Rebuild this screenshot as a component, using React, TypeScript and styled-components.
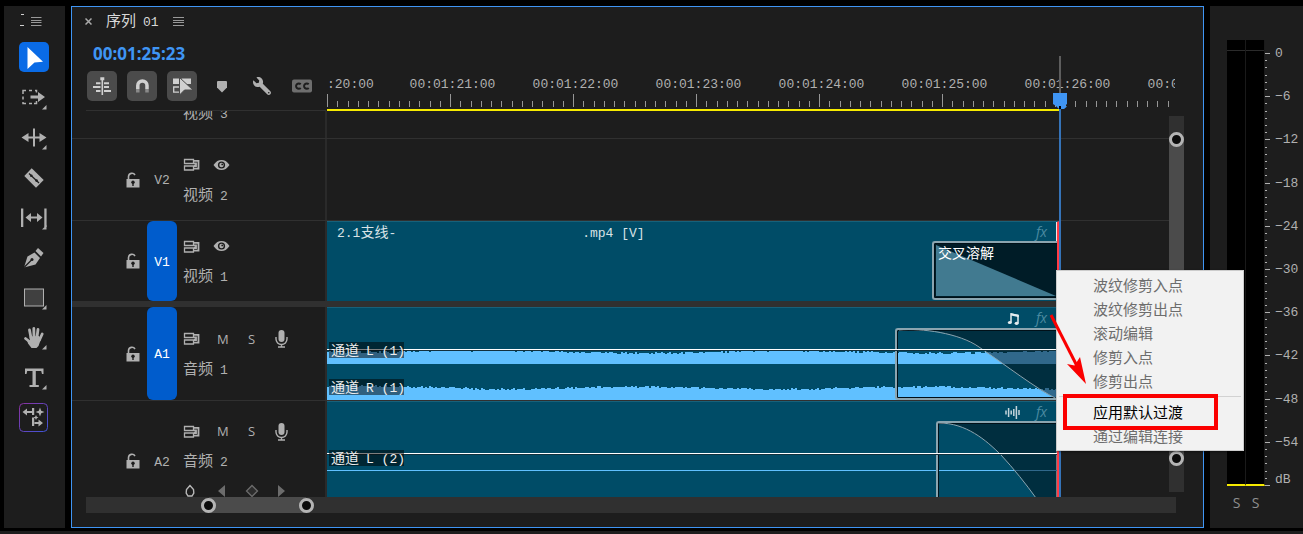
import React from "react";
import styled, { createGlobalStyle, css } from "styled-components";
import { FaWrench } from "react-icons/fa";

const PX_PER_SECOND = 123;
const HEAD_WIDTH = 255;
const CLIP_WIDTH = 732;
const PLAYHEAD = 733;

const color = {
  panel: "#1d1d1d",
  line: "#303030",
  icon: "#b0b0b0",
  accent: "#3f95f4",
  blue: "#005ccc",
  clip: "#004c67",
  wave: "#60c0ff",
};

const cjk = `"Noto Sans CJK SC", sans-serif`;
const mono = `"Liberation Mono", "Noto Sans CJK SC", monospace`;

const Global = createGlobalStyle`
  * { box-sizing: border-box; }
  body { margin: 0; background: #000; color: ${color.icon}; font-family: ${cjk}; font-size: 15px; overflow: hidden; }
  button { padding: 0; border: 0; background: none; color: inherit; font: inherit; }
  svg { display: block; flex: none; }
`;

const Page = styled.div`
  position: relative;
  display: flex;
  flex-direction: column;
  gap: 3px;
  height: 100vh;
  padding-top: 6px;
`;
const Workspace = styled.main`
  flex: 1;
  min-height: 0;
  display: flex;
  gap: 6px;
  padding-left: 4px;
`;
const StatusStrip = styled.footer`
  height: 3px;
  background: ${color.panel};
`;

/* ---------- tool palette ---------- */
const ToolPanel = styled.aside`
  width: 61px;
  background: ${color.panel};
  display: flex;
  flex-direction: column;
`;
const ToolTab = styled.div`
  height: 36px;
  padding-left: 15px;
  display: flex;
  align-items: flex-start;
`;
const ToolList = styled.div`
  display: flex;
  flex-direction: column;
  gap: 10px;
  padding-left: 15px;
`;
const ToolButton = styled.button<{ $active?: boolean }>`
  width: 30px;
  height: 30px;
  border-radius: 5px;
  color: ${(p) => (p.$active ? "#fff" : color.icon)};
  background: ${(p) => (p.$active ? "#0a6be6" : "transparent")};
`;

const Corner = () => <path d="M27.500 23v4.500h-4.500z" fill="currentColor" />;

const tools: { name: string; art: React.ReactNode }[] = [
  { name: "选择工具", art: <path d="M8.500 5 24 19.800l-8.500.7-7 6.500z" fill="currentColor" /> },
  {
    name: "向前选择轨道工具",
    art: (
      <>
        <path d="M4 12V8.500h3M10 8.500h3M16 8.500h1.500v2M4 14.500v3M4 20v1.500h3M10 21.500h3M15 21.500h2.500V19" fill="none" stroke="currentColor" strokeWidth="1.500" />
        <path d="M11.500 13.500H19v-3.500l7 5-7 5v-3.500h-7.500z" fill="currentColor" />
        <Corner />
      </>
    ),
  },
  {
    name: "波纹编辑工具",
    art: (
      <>
        <path d="M14 6.500h2v18h-2zM2.500 15.500l7-4.500v3.500h11V11l7 4.500-7 4.500v-3.500h-11V20z" fill="currentColor" />
        <Corner />
      </>
    ),
  },
  {
    name: "剃刀工具",
    art: (
      <>
        <path d="M12.700 6.300 24.700 18 17 25.700 5.300 14z" fill="currentColor" />
        <path d="m10 11.500 10 9.500" stroke={color.panel} strokeWidth="1.300" />
        <circle cx="12.300" cy="13.700" r="1.300" fill={color.panel} />
        <circle cx="17.500" cy="18.600" r="1.300" fill={color.panel} />
      </>
    ),
  },
  {
    name: "外滑工具",
    art: (
      <>
        <path d="M2 6.500h2.300v18.500H2zM25.300 6.500h2.300v18.500h-2.300zM6.500 15.500l5.500-4.500v3.500h6V11l5.500 4.500L18 20v-3.500h-6V20z" fill="currentColor" />
        <Corner />
      </>
    ),
  },
  {
    name: "钢笔工具",
    art: (
      <>
        <path d="M5 25.500 8.500 14.500l7-4L21 16l-4.500 6.500z" fill="currentColor" />
        <path d="m16.500 9 2.500-3 5.500 5-2.500 3.500z" fill="currentColor" />
        <path d="m5 25.500 7.500-7.500" stroke={color.panel} strokeWidth="1.200" />
        <circle cx="13" cy="17.500" r="1.500" fill={color.panel} />
      </>
    ),
  },
  {
    name: "矩形工具",
    art: (
      <>
        <rect x="5.500" y="7" width="19" height="17" fill="#404040" stroke="currentColor" />
        <Corner />
      </>
    ),
  },
  {
    name: "手形工具",
    art: (
      <>
        <path d="M10.500 8 12 16M14.800 6.500 15 15M19 7.500 18 15M23.200 12 20.500 18M6.500 16.500 11 20" stroke="currentColor" strokeWidth="2.800" strokeLinecap="round" />
        <path d="M10.500 14.500 20 14l2 3-2.500 7-2 2h-5L9 21.500l-1-3.500 3 1z" fill="currentColor" />
        <Corner />
      </>
    ),
  },
  {
    name: "文字工具",
    art: (
      <>
        <path d="M6 6.500h18.500V12H23l-.8-3h-5.400v14h3v2h-9.300v-2h3V9H8.200L7.500 12H6z" fill="currentColor" />
        <Corner />
      </>
    ),
  },
  {
    name: "重新混合工具",
    art: (
      <>
        <defs>
          <linearGradient id="remix" x1="0" y1="0" x2="1" y2="1">
            <stop offset="0" stopColor="#8a32a0" />
            <stop offset="1" stopColor="#3f55d8" />
          </linearGradient>
        </defs>
        <rect x=".5" y="1.500" width="28" height="28" rx="4" fill="none" stroke="url(#remix)" />
        <path d="M13 6h2.200v7H13zM13 15.500h2.200V24H13zM3.500 10 8 6.500V9h5v2H8v2.500zM24 21l-4.500 3.500V22h-4v-2h4v-2.500zM21 5.500l1.200 3.300 3.300 1.200-3.300 1.200L21 14.500l-1.200-3.300-3.300-1.200 3.300-1.200zM17 13l.8 1.700 1.700.8-1.700.8-.8 1.700-.8-1.700-1.700-.8 1.700-.8z" fill="currentColor" />
      </>
    ),
  },
];

/* ---------- timeline panel ---------- */
const Timeline = styled.section`
  flex: 1;
  min-width: 0;
  display: flex;
  flex-direction: column;
  padding-bottom: 14px;
  background: ${color.panel};
  border: 1px solid ${color.accent};
`;
const TitleBar = styled.header`
  height: 29px;
  padding-left: 13px;
  display: flex;
  align-items: center;
  gap: 14px;
  color: #d8d8d8;
`;
const TitleText = styled.h1`
  margin: 0;
  font-size: 15px;
  font-weight: 400;
  line-height: 24px;
`;
const Latin = styled.span`
  font-family: ${mono};
  font-size: 13px;
`;
const Index = styled(Latin)`
  margin-left: 7px;
`;
const Stage = styled.div`
  position: relative;
  flex: 1;
  min-height: 0;
  display: flex;
  flex-direction: column;
`;
const TopRow = styled.div`
  display: flex;
  height: 75px;
`;
const Controls = styled.div`
  width: ${HEAD_WIDTH - 1}px;
  margin-right: 1px;
  padding-left: 14px;
`;
const Timecode = styled.div`
  height: 35px;
  padding-left: 7px;
  line-height: 36px;
  font-family: "Noto Sans", sans-serif;
  font-size: 17px;
  font-weight: 700;
  color: ${color.accent};
`;
const Buttons = styled.div`
  display: flex;
  gap: 10px;
  padding: 0 0 9px 1px;
  border-bottom: 1px solid ${color.line};
`;
const OptionButton = styled.button<{ $on?: boolean }>`
  width: 30px;
  height: 30px;
  border-radius: 5px;
  background: ${(p) => (p.$on ? "#4b4b4b" : "transparent")};
  color: ${(p) => (p.$on ? "#d0d0d0" : color.icon)};
  display: flex;
  align-items: center;
  justify-content: center;
`;
const Ruler = styled.div`
  flex: 1;
  min-width: 0;
  margin-right: 28px;
  display: flex;
  flex-direction: column;
  justify-content: flex-end;
  overflow: hidden;
`;
const RulerLabels = styled.div`
  display: flex;
  height: 20px;
  line-height: 22px;
  font-family: ${mono};
  font-size: 13px;
`;
const RulerLabel = styled.span<{ $first?: boolean }>`
  flex: 0 0 ${(p) => (p.$first ? 64 : PX_PER_SECOND)}px;
  text-align: ${(p) => (p.$first ? "left" : "center")};
`;
const WorkArea = styled.div`
  width: ${PLAYHEAD}px;
  height: 2px;
  margin-top: 2px;
  background: #f6ea00;
`;

const TracksRow = styled.div`
  flex: 1;
  min-height: 0;
  display: flex;
`;
const Tracks = styled.div`
  flex: 1;
  min-width: 0;
  overflow: hidden;
`;
const Track = styled.div<{ $height: number; $line?: boolean }>`
  display: flex;
  height: ${(p) => p.$height}px;
  align-items: flex-end;
  overflow: hidden;
  ${(p) => p.$line && css`border-bottom: 1px solid ${color.line};`}
`;
const TrackDivider = styled.div`
  height: 6px;
  background: ${color.line};
`;
const Head = styled.div<{ $height: number }>`
  flex: 0 0 ${HEAD_WIDTH}px;
  height: ${(p) => p.$height}px;
  display: flex;
  align-items: center;
  padding-left: 53px;
  border-right: 2px solid #2a2a2a;
`;
const LockButton = styled.button`
  width: 16px;
  height: 16px;
  margin-right: 6px;
`;
const Patch = styled.button<{ $on?: boolean }>`
  width: 30px;
  height: 100%;
  padding-top: 2px;
  border-radius: 6px;
  background: ${(p) => (p.$on ? color.blue : "transparent")};
  color: ${(p) => (p.$on ? "#fff" : color.icon)};
  font-family: ${mono};
  font-size: 13px;
`;
const HeadLines = styled.div`
  padding-left: 6px;
`;
const HeadLine = styled.div`
  display: flex;
  align-items: center;
  height: 30px;
`;
const TrackName = styled.div`
  height: 30px;
  line-height: 28px;
`;
const HeadButton = styled.button<{ $inset?: number }>`
  width: 30px;
  height: 20px;
  padding-left: ${(p) => p.$inset ?? 0}px;
  display: flex;
  align-items: center;
  font-family: "Open Sans", sans-serif;
  font-size: 13px;
`;
const Lane = styled.div`
  flex: 1;
  min-width: 0;
  height: 100%;
`;

const Clip = styled.div`
  position: relative;
  width: ${CLIP_WIDTH}px;
  height: 100%;
  background: ${color.clip};
  border-top: 1px solid #17617a;
  border-right: 2px solid #ff3b46;
  box-shadow: inset -1px 0 #e8e8e8;
  color: #d8e2e6;
`;
const ClipBar = styled.div`
  display: flex;
  align-items: baseline;
  height: 20px;
  padding: 0 10px;
  line-height: 18px;
  font-size: 14px;
`;
const ClipSuffix = styled(Latin)`
  margin-left: 186px;
`;
const ClipTags = styled.div`
  margin-left: auto;
  display: flex;
  align-items: center;
  gap: 16px;
  line-height: 20px;
`;
const Fx = styled.span`
  font-family: "Open Sans", sans-serif;
  font-style: italic;
  font-size: 14px;
  color: #4b8aa0;
`;
const Channel = styled.div<{ $top: number }>`
  position: relative;
  height: 36px;
  padding: ${(p) => p.$top}px 0 0 2px;
  > svg { position: absolute; left: 0; bottom: 0; }
`;
const ChannelLabel = styled.span`
  position: relative;
  z-index: 3;
  display: block;
  width: 75px;
  height: 16px;
  padding-left: 2px;
  line-height: 15px;
  background: rgba(0, 0, 0, 0.5);
  color: #eee;
  font-size: 14px;
  white-space: nowrap;
`;
const LevelLine = styled.div<{ $top: number }>`
  position: absolute;
  z-index: 2;
  left: 0;
  right: 0;
  top: ${(p) => p.$top}px;
  height: 2px;
  background: #fff;
  border-bottom: 1px solid #12303c;
`;
const SilentLine = styled.div`
  position: absolute;
  left: 0;
  right: 0;
  top: 68px;
  height: 1px;
  background: ${color.wave};
`;
const Transition = styled.div<{ $width: number; $height: number; $top: number; $solid?: boolean }>`
  position: absolute;
  right: 0;
  top: ${(p) => p.$top}px;
  width: ${(p) => p.$width}px;
  height: ${(p) => p.$height}px;
  overflow: hidden;
  border: 2px solid #8ba5b0;
  border-right: 0;
  border-radius: 3px 0 0 3px;
  box-shadow: inset 1px 1px #001018, inset 0 -1px #001018;
  background: ${(p) => (p.$solid ? "#001c27" : "transparent")};
`;
const TransitionLabel = styled.span`
  position: absolute;
  left: 4px;
  top: 1px;
  line-height: 16px;
  font-size: 14px;
  color: #fff;
`;

const Playhead = styled.div`
  position: absolute;
  z-index: 4;
  left: ${HEAD_WIDTH + PLAYHEAD - 7}px;
  top: 20px;
  bottom: 0;
  width: 14px;
  display: flex;
  flex-direction: column;
  align-items: center;
  &::before { content: ""; width: 2px; height: 37px; background: #5d5d5d; }
  &::after { content: ""; width: 2px; flex: 1; background: #3573b8; }
`;

/* ---------- zoom scroll bars ---------- */
const VScroll = styled.div`
  width: 15px;
  margin: 5px 19px 5px 0;
  padding: 16px 0 26px;
  background: ${color.line};
`;
const HScroll = styled.div`
  height: 16px;
  margin: 0 27px 0 14px;
  padding-left: 115px;
  display: flex;
  background: ${color.line};
`;
const Thumb = styled.div<{ $vertical?: boolean }>`
  display: flex;
  flex-direction: ${(p) => (p.$vertical ? "column" : "row")};
  align-items: center;
  justify-content: space-between;
  ${(p) => (p.$vertical ? css`height: 100%;` : css`width: 113px;`)}
  background: linear-gradient(${(p) => (p.$vertical ? "180deg" : "90deg")}, transparent 8px, #4b4b4b 8px, #4b4b4b calc(100% - 8px), transparent calc(100% - 8px));
`;
const Knob = styled.button`
  width: 15px;
  height: 15px;
  border: 3px solid #b4b4b4;
  border-radius: 50%;
  background: #0c0c0c;
`;

/* ---------- audio meter ---------- */
const Meter = styled.aside`
  width: 93px;
  padding: 34px 0 0 17px;
  background: ${color.panel};
`;
const MeterBody = styled.div`
  display: flex;
  height: 446px;
`;
const MeterBar = styled.div`
  width: 19px;
  padding-top: 10px;
  background: #000;
  border-right: 1px solid #1a1a1a;
  border-bottom: 2px solid #f6ea00;
  &::before { content: ""; display: block; height: 1px; background: #2b2b2b; }
`;
const ScaleTicks = styled.div`
  padding: 13px 4px 0 0;
`;
const ScaleLabels = styled.div`
  margin-top: -8px;
  font-family: ${mono};
  font-size: 13px;
`;
const ScaleGrid = styled.div`
  display: grid;
  grid-template-rows: repeat(10, 1fr);
  align-items: center;
  height: 432px;
`;
const UnitLabel = styled.div`
  line-height: 32px;
`;
const SoloRow = styled.div`
  display: flex;
  gap: 10px;
  padding: 5px 0 0 5px;
`;
const SoloButton = styled.button`
  width: 9px;
  height: 22px;
  font-family: "Open Sans", sans-serif;
  font-size: 14px;
  color: #909090;
`;

/* ---------- context menu and callout ---------- */
const Menu = styled.div`
  position: absolute;
  z-index: 10;
  left: 1056px;
  top: 270px;
  width: 188px;
  padding: 2px 2px 2px;
  background: #f2f2f2;
  border: 1px solid #ccc;
  box-shadow: 1px 1px 2px rgba(0, 0, 0, 0.5);
`;
const MenuItem = styled.button<{ $enabled?: boolean }>`
  display: block;
  width: 100%;
  height: 24px;
  padding-left: 34px;
  line-height: 24px;
  text-align: left;
  font-size: 15px;
  color: ${(p) => (p.$enabled ? "#000" : "#6d6d6d")};
`;
const MenuRule = styled.hr`
  height: 1px;
  margin: 3px 0;
  border: 0;
  background: #d2d2d2;
`;
const Callout = styled.div`
  position: absolute;
  z-index: 11;
  left: 1063px;
  top: 394px;
  width: 155px;
  height: 36px;
  border: 4px solid #fb0000;
`;
const Arrow = styled.svg`
  position: absolute;
  z-index: 11;
  left: 1047px;
  top: 310px;
`;

const LockIcon = () => (
  <svg width="16" height="16" viewBox="0 0 16 16">
    <path d="M3.500 8V4.500A3.500 3.500 0 0 1 10 3" fill="none" stroke={color.icon} strokeWidth="1.600" />
    <path d="M1.500 7h13v8.500h-13z" fill={color.icon} />
    <circle cx="8" cy="10.300" r="1.700" fill={color.panel} />
    <path d="M7.300 10.500h1.400V14H7.300z" fill={color.panel} />
  </svg>
);
const SyncIcon = () => (
  <svg width="17" height="13" viewBox="0 0 17 13" fill="none" stroke={color.icon}>
    <path d="M1.500 1.500h9v4h-9zM1.500 8h9v4h-9z" strokeWidth="1.300" />
    <path d="M11 2.800h4.500v7.800H11M11 5.500h2v2.500h-2" strokeWidth="1.800" />
  </svg>
);
const EyeIcon = () => (
  <svg width="17" height="12" viewBox="0 0 17 12">
    <path d="M.5 6C3 2.300 5.500 1 8.500 1s5.500 1.300 8 5c-2.500 3.700-5 5-8 5S3 9.700.5 6z" fill={color.icon} />
    <circle cx="8.500" cy="6" r="3.600" fill={color.panel} />
    <circle cx="8.500" cy="6" r="2.200" fill={color.icon} />
    <circle cx="9.200" cy="5.400" r=".9" fill={color.panel} />
  </svg>
);
const MicIcon = () => (
  <svg width="13" height="19" viewBox="0 0 13 19">
    <rect x="3.500" y="1" width="6" height="12" rx="3" fill={color.icon} />
    <path d="M1 8v2a5.500 5.500 0 0 0 11 0V8M6.500 15v3M3 18h7" fill="none" stroke={color.icon} strokeWidth="1.400" />
  </svg>
);
const MusicIcon = () => (
  <svg width="13" height="13" viewBox="0 0 13 13">
    <path d="M4 10.500V2l7 1.500V11" fill="none" stroke="#e4ecef" strokeWidth="1.500" />
    <path d="M4 1.200 11.800 2.800v2.400L4 3.600z" fill="#e4ecef" />
    <ellipse cx="2.800" cy="10.500" rx="2" ry="1.600" fill="#e4ecef" />
    <ellipse cx="9.600" cy="11.300" rx="2" ry="1.600" fill="#e4ecef" />
  </svg>
);
const SoundIcon = () => (
  <svg width="15" height="13" viewBox="0 0 15 13" stroke="#c5d5db" strokeWidth="1.500">
    <path d="M1 4.500v4M3.600 2v9M6.200 4.500v4M8.800 3v7M11.400 0v13M14 4v5" />
  </svg>
);

/** Amplitude bars of one channel, two pixels to a sample. */
function Waveform({ seed, dip }: { seed: number; dip: number }) {
  let d = "M0 20";
  let s = seed;
  for (let x = 0; x <= 730; x += 2) {
    s = (s * 1103515245 + 12345) % 2147483648;
    const noise = (s / 2147483648) * 2;
    const y = 6 + Math.round(noise + Math.sin(x / 45 + seed) * 1.2 + (x > 140 ? dip : 0));
    d += `V${y}h2`;
  }
  return (
    <svg width="730" height="20" viewBox="0 0 730 20" shapeRendering="crispEdges">
      <path d={`${d}V20z`} fill={color.wave} />
    </svg>
  );
}

function RulerTicks() {
  const ticks = Array.from({ length: 100 }, (_, i) => i);
  return (
    <svg width="100%" height="13" shapeRendering="crispEdges">
      {ticks.map((i) => {
        const x = Math.round((i * PX_PER_SECOND) / 12);
        return <rect key={i} x={x} y={i % 12 ? 7 : 0} width="1" height={i % 12 ? 6 : 13} fill="#969696" />;
      })}
    </svg>
  );
}

function TrackHead({ id, kind, n, height, on, keys }: { id: string; kind: "视频" | "音频"; n: number; height: number; on?: boolean; keys?: boolean }) {
  return (
    <Head $height={height}>
      <LockButton aria-label="锁定轨道"><LockIcon /></LockButton>
      <Patch $on={on}>{id}</Patch>
      <HeadLines>
        <HeadLine>
          <HeadButton aria-label="同步锁定"><SyncIcon /></HeadButton>
          {kind === "视频" ? (
            <HeadButton aria-label="切换轨道输出"><EyeIcon /></HeadButton>
          ) : (
            <>
              <HeadButton $inset={4}>M</HeadButton>
              <HeadButton $inset={5}>S</HeadButton>
              <HeadButton $inset={2} aria-label="画外音录制"><MicIcon /></HeadButton>
            </>
          )}
        </HeadLine>
        <TrackName>{kind}<Index>{n}</Index></TrackName>
        {keys && (
          <HeadLine>
            <svg width="104" height="14" viewBox="0 0 104 14">
              <path d="M7 1.500 3.500 5.500 3.200 9 5 12h4l1.800-3-.3-3.500z" fill="none" stroke="#b8b8b8" strokeWidth="1.400" />
              <path d="M42 1v12l-7-6zM95 1v12l7-6z" fill="#6c6c6c" />
              <path d="m69 1.500 5.500 5.500-5.500 5.500L63.500 7z" fill="#2c2c2c" stroke="#6c6c6c" strokeWidth="1.300" />
            </svg>
          </HeadLine>
        )}
      </HeadLines>
    </Head>
  );
}

const dbMarks = ["0", "−6", "−12", "−18", "−24", "−30", "−36", "−42", "−48", "−54"];

export default function App() {
  return (
    <Page>
      <Global />
      <Workspace>
        <ToolPanel>
          <ToolTab>
            <svg width="24" height="24" viewBox="0 0 24 24">
              <path d="M2 8.500h3M1 19.500h4" stroke="#d0d0d0" />
              <path d="M12 11.500h10.500M12 14.500h10.500M12 16.500h10.500M12 19.500h10.500" stroke="#999" />
            </svg>
          </ToolTab>
          <ToolList>
            {tools.map((t, i) => (
              <ToolButton key={t.name} $active={i === 0} aria-label={t.name}>
                <svg width="30" height="30" viewBox="0 0 30 30">{t.art}</svg>
              </ToolButton>
            ))}
          </ToolList>
        </ToolPanel>

        <Timeline>
          <TitleBar>
            <svg width="7" height="7" viewBox="0 0 7 7" stroke="#aaa" strokeWidth="1.500"><path d="m.5.5 6 6M6.500.5l-6 6" /></svg>
            <TitleText>序列<Index>01</Index></TitleText>
            <svg width="11" height="11" viewBox="0 0 11 11" stroke="#999">
              <path d="M0 1.500h11M0 4.500h11M0 6.500h11M0 9.500h11" />
            </svg>
          </TitleBar>

          <Stage>
            <TopRow>
              <Controls>
                <Timecode>00:01:25:23</Timecode>
                <Buttons>
                  <OptionButton $on aria-label="嵌套序列">
                    <svg width="30" height="30" viewBox="0 0 30 30" fill="currentColor">
                      <path d="M14.500 8h1.600v16h-1.600zM13.300 6.300h4v3h-4zM9 11.300h4.500v2H9zM6 15h7.500v2H6zM9 19h4.500v2H9zM17 11.300h5v2h-5zM17 15h3v2h-3zM17 19h7v2h-7zM20 15h2v2h-2z" />
                    </svg>
                  </OptionButton>
                  <OptionButton $on aria-label="对齐">
                    <svg width="30" height="30" viewBox="0 0 30 30" fill="none" strokeWidth="3.500">
                      <path d="M10.800 18v-3.500a4.600 4.600 0 0 1 9.200 0V18" stroke="currentColor" />
                      <path d="M10.800 18v3.500M20 18v3.500" stroke="#8a8a8a" />
                    </svg>
                  </OptionButton>
                  <OptionButton $on aria-label="链接选择项">
                    <svg width="30" height="30" viewBox="0 0 30 30">
                      <path d="M6 7.500h7v5.500H6zM14.500 7.500H24v5.500h-9.500z" fill="currentColor" />
                      <path d="M12 16H6.700v5.200H12" fill="none" stroke="currentColor" strokeWidth="1.300" />
                      <path d="M12.500 6.500v17.500l5-5H26z" fill="currentColor" stroke="#4b4b4b" />
                    </svg>
                  </OptionButton>
                  <OptionButton aria-label="添加标记">
                    <svg width="30" height="30" viewBox="0 0 30 30"><path d="M11 10h8q1 0 1 1v5.500L15 21.500l-5-5V11q0-1 1-1z" fill="currentColor" /></svg>
                  </OptionButton>
                  <OptionButton aria-label="时间轴显示设置">
                    <FaWrench size={18} transform="scale(-1,1)" />
                  </OptionButton>
                  <OptionButton aria-label="字幕轨道选项">
                    <svg width="30" height="30" viewBox="0 0 30 30" fill="none">
                      <rect x="5" y="8.500" width="20" height="13" rx="2" fill="#6e6e6e" />
                      <path d="M13.700 13.200a2.700 2.700 0 1 0 0 3.800M21.700 13.200a2.700 2.700 0 1 0 0 3.800" stroke={color.panel} strokeWidth="2" />
                    </svg>
                  </OptionButton>
                </Buttons>
              </Controls>
              <Ruler>
                <RulerLabels>
                  <RulerLabel $first>:20:00</RulerLabel>
                  {[21, 22, 23, 24, 25, 26, 27].map((s) => (
                    <RulerLabel key={s}>00:01:{s}:00</RulerLabel>
                  ))}
                </RulerLabels>
                <RulerTicks />
                <WorkArea />
              </Ruler>
            </TopRow>

            <TracksRow>
              <Tracks>
                <Track $height={28} $line>
                  <TrackHead id="V3" kind="视频" n={3} height={81} />
                  <Lane />
                </Track>
                <Track $height={82} $line>
                  <TrackHead id="V2" kind="视频" n={2} height={81} />
                  <Lane />
                </Track>
                <Track $height={80}>
                  <TrackHead id="V1" kind="视频" n={1} height={80} on />
                  <Lane>
                    <Clip>
                      <ClipBar>
                        <span><Latin>2.1</Latin>支线<Latin>-</Latin></span>
                        <ClipSuffix>.mp4 [V]</ClipSuffix>
                        <ClipTags><Fx>fx</Fx></ClipTags>
                      </ClipBar>
                      <Transition $width={125} $height={59} $top={19} $solid>
                        <svg width="123" height="55" viewBox="0 0 123 55"><path d="M2 2v51h120z" fill="#417a90" /></svg>
                        <TransitionLabel>交叉溶解</TransitionLabel>
                      </Transition>
                    </Clip>
                  </Lane>
                </Track>
                <TrackDivider />
                <Track $height={94} $line>
                  <TrackHead id="A1" kind="音频" n={1} height={93} on />
                  <Lane>
                    <Clip>
                      <ClipBar><ClipTags><MusicIcon /><Fx>fx</Fx></ClipTags></ClipBar>
                      <Channel $top={14}>
                        <Waveform seed={7} dip={1} />
                        <ChannelLabel>通道<Index>L (1)</Index></ChannelLabel>
                      </Channel>
                      <Channel $top={15}>
                        <Waveform seed={23} dip={1} />
                        <ChannelLabel>通道<Index>R (1)</Index></ChannelLabel>
                      </Channel>
                      <LevelLine $top={41} />
                      <Transition $width={162} $height={72} $top={20}>
                        <svg width="160" height="68" viewBox="0 0 160 68">
                          <path d="M30 0C62 3 82 17 101 30C123 46 138 58 160 69V0z" fill="rgba(0,15,24,.5)" />
                          <path d="M2 0C25 -2 62 3 82 17C110 36 138 58 160 69" fill="none" stroke="#8ba5b0" />
                        </svg>
                      </Transition>
                    </Clip>
                  </Lane>
                </Track>
                <Track $height={120}>
                  <TrackHead id="A2" kind="音频" n={2} height={120} keys />
                  <Lane>
                    <Clip>
                      <ClipBar><ClipTags><SoundIcon /><Fx>fx</Fx></ClipTags></ClipBar>
                      <Channel $top={28}>
                        <ChannelLabel>通道<Index>L (2)</Index></ChannelLabel>
                      </Channel>
                      <LevelLine $top={51} />
                      <SilentLine />
                      <Transition $width={121} $height={120} $top={19}>
                        <svg width="119" height="116" viewBox="0 0 119 116">
                          <path d="M1 0C28 0 48 17 63 32C76 46 88 61 98 75L120 110V0z" fill="rgba(0,15,24,.5)" />
                          <path d="M1 0C28 0 48 17 63 32C76 46 88 61 98 75L120 110" fill="none" stroke="#8ba5b0" />
                        </svg>
                      </Transition>
                    </Clip>
                  </Lane>
                </Track>
              </Tracks>
              <VScroll>
                <Thumb $vertical><Knob aria-label="轨道高度上限" /><Knob aria-label="轨道高度下限" /></Thumb>
              </VScroll>
            </TracksRow>

            <Playhead>
              <svg width="14" height="16" viewBox="0 0 14 16">
                <path d="M0 0h14v11l-2 1.500 2 1-3 2.500H6l-3-3-3-2z" fill={color.accent} />
                <path d="M6 13h2v3H6z" fill="#000" />
              </svg>
            </Playhead>
          </Stage>

          <HScroll>
            <Thumb><Knob aria-label="缩放起点" /><Knob aria-label="缩放终点" /></Thumb>
          </HScroll>
        </Timeline>

        <Meter>
          <MeterBody>
            <MeterBar />
            <MeterBar />
            <ScaleTicks>
              <svg width="6" height="433" shapeRendering="crispEdges" fill={color.icon}>
                {Array.from({ length: 61 }, (_, i) => (
                  <rect key={i} x="0" y={Math.round(i * 7.2)} width={i % 6 ? 2 : 5} height="1" />
                ))}
              </svg>
            </ScaleTicks>
            <ScaleLabels>
              <ScaleGrid>{dbMarks.map((m) => <span key={m}>{m}</span>)}</ScaleGrid>
              <UnitLabel>dB</UnitLabel>
            </ScaleLabels>
          </MeterBody>
          <SoloRow>
            <SoloButton>S</SoloButton>
            <SoloButton>S</SoloButton>
          </SoloRow>
        </Meter>
      </Workspace>
      <StatusStrip />

      <Menu role="menu">
        <MenuItem role="menuitem">波纹修剪入点</MenuItem>
        <MenuItem role="menuitem">波纹修剪出点</MenuItem>
        <MenuItem role="menuitem">滚动编辑</MenuItem>
        <MenuItem role="menuitem">修剪入点</MenuItem>
        <MenuItem role="menuitem">修剪出点</MenuItem>
        <MenuRule />
        <MenuItem role="menuitem" $enabled>应用默认过渡</MenuItem>
        <MenuItem role="menuitem">通过编辑连接</MenuItem>
      </Menu>
      <Callout />
      <Arrow width="44" height="78" viewBox="0 0 44 78">
        <path d="M4 5 30 56" stroke="#fb0000" strokeWidth="3" />
        <path d="M39 74 20 54l7.500 1.500L33 47z" fill="#fb0000" />
      </Arrow>
    </Page>
  );
}
